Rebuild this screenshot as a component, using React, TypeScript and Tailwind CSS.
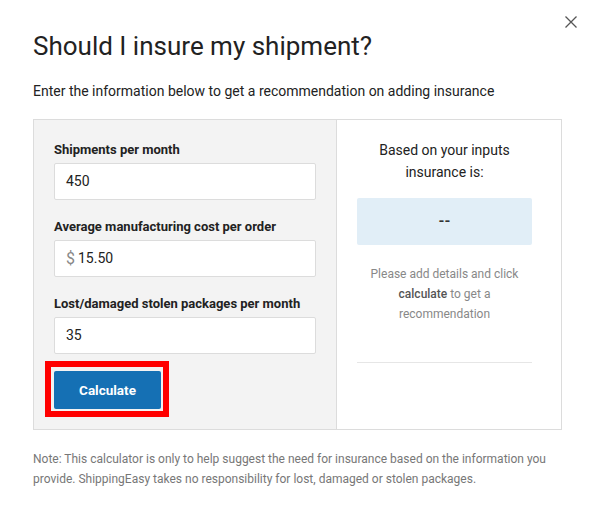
import React from "react";

export default function App() {
  return (
    <div className="w-[596px] h-[520px] bg-white relative text-[#222]" style={{ fontFamily: "Roboto, 'Liberation Sans', sans-serif" }}>
      <button className="absolute left-[565px] top-[16px] w-[12px] h-[12px] text-[#555]" aria-label="close">
        <svg width="12" height="12" viewBox="0 0 12 12" fill="none" stroke="currentColor" strokeWidth="1.3">
          <path d="M0.5 0.5 L11.5 11.5 M11.5 0.5 L0.5 11.5" />
        </svg>
      </button>
      <div className="pl-[33px] pr-[34px] pt-[28px]">
        <h1 className="text-[26px] leading-[36px] text-[#222] font-normal">Should I insure my shipment?</h1>
        <p className="mt-[17px] text-[14px] leading-[20px] text-[#222]">Enter the information below to get a recommendation on adding insurance</p>
        <div className="mt-[18px] flex border border-[#dcdcdc] h-[311px]">
          <div className="w-[303px] bg-[#f3f3f3] border-r border-[#dcdcdc] px-[20px] pt-[20px]">
            <div className="text-[13px] leading-[20px] font-bold text-[#222]">Shipments per month</div>
            <div className="mt-[3px] h-[37px] bg-white border border-[#dcdcdc] rounded-[2px] flex items-center px-[11px] text-[14px]">450</div>
            <div className="mt-[17px] text-[13px] leading-[20px] font-bold text-[#222]">Average manufacturing cost per order</div>
            <div className="mt-[3px] h-[37px] bg-white border border-[#dcdcdc] rounded-[2px] flex items-center px-[11px] text-[14px]">
              <span className="text-[#888] text-[16px] mr-[3px]">$</span>15.50
            </div>
            <div className="mt-[17px] text-[13px] leading-[20px] font-bold text-[#222]">Lost/damaged stolen packages per month</div>
            <div className="mt-[3px] h-[37px] bg-white border border-[#dcdcdc] rounded-[2px] flex items-center px-[11px] text-[14px]">35</div>
            <div className="relative mt-[17px] w-[107px] h-[38px]">
              <button className="w-[107px] h-[38px] bg-[#1570b4] rounded-[2px] text-white text-[13.5px] font-bold">Calculate</button>
              <div className="absolute left-[-9px] top-[-10px] w-[124px] h-[56px] border-[6px] border-[#ff0000] pointer-events-none" />
            </div>
          </div>
          <div className="flex-1 pl-[20px] pr-[29px] pt-[19px] flex flex-col items-center">
            <div className="text-[14px] leading-[22px] text-center text-[#222]">Based on your inputs<br />insurance is:</div>
            <div className="mt-[15px] w-full h-[47px] bg-[#e1eef7] rounded-[2px] flex items-center justify-center text-[15px] font-bold text-[#333]">--</div>
            <div className="mt-[19px] text-[12px] leading-[20px] text-center text-[#888]">
              Please add details and click<br /><span className="font-medium text-[#555]">calculate</span> to get a<br />recommendation
            </div>
            <div className="mt-[38px] w-full border-t border-[#e6e6e6]" />
          </div>
        </div>
        <p className="mt-[19px] text-[12px] leading-[20px] text-[#777]">
          Note: This calculator is only to help suggest the need for insurance based on the information you provide. ShippingEasy takes no responsibility for lost, damaged or stolen packages.
        </p>
      </div>
    </div>
  );
}
